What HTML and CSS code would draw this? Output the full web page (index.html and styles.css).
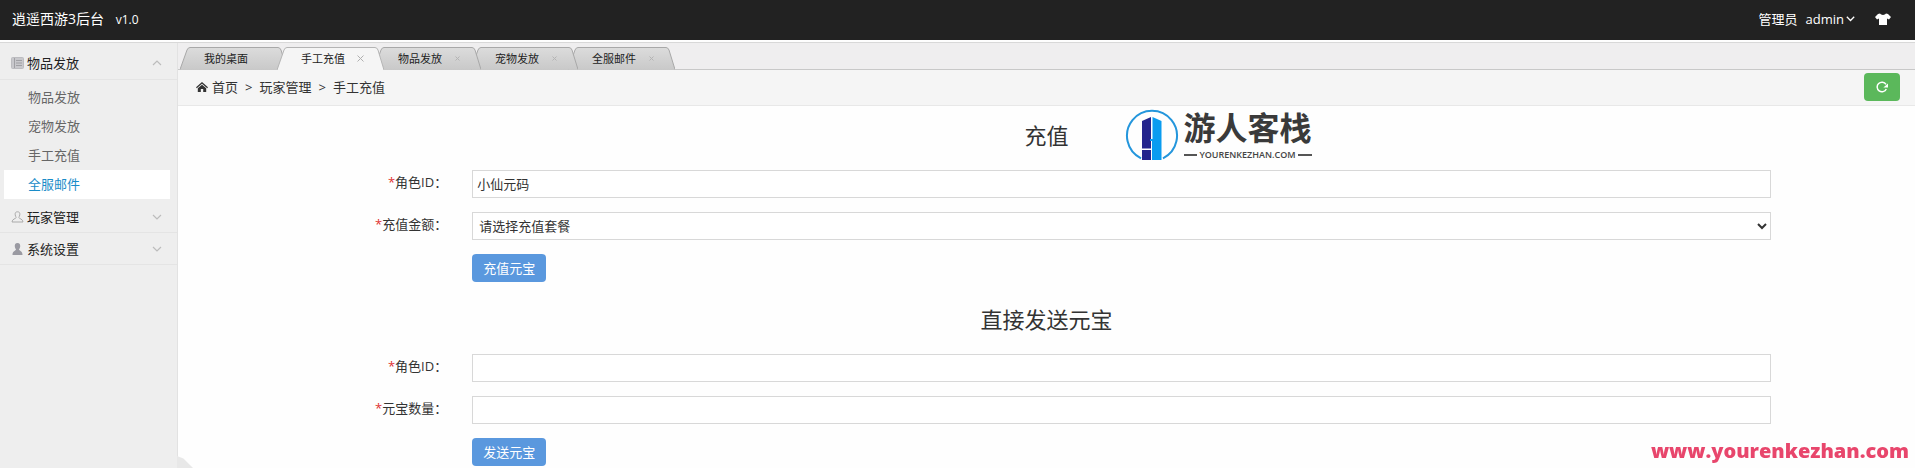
FILE: index.html
```
<!DOCTYPE html>
<html lang="zh-CN">
<head>
    <meta charset="UTF-8">
    <meta name="viewport" content="width=device-width, initial-scale=1.0">
    <title>逍遥西游3后台</title>
    <link rel="stylesheet" href="styles.css">
</head>
<body>
    <header class="navbar">
        <div class="brand">逍遥西游3后台 <span class="version">v1.0</span></div>
        <div class="userbar">
            <span>管理员</span>
            <a href="#" class="user">admin
                <svg width="9" height="6" viewBox="0 0 9 6"><path d="M0.8 0.8 4.5 4.5 8.2 0.8" fill="none" stroke="#fff" stroke-width="1.3"/></svg>
            </a>
            <a href="#" class="skin" aria-label="换肤">
                <svg width="16" height="12" viewBox="0 0 16 12"><path d="M5 0.5C6 2.4 10 2.4 11 0.5L13 1 16 4 14 6.5 12 5.5V12H4V5.5L2 6.5 0 4 3 1Z" fill="#fff"/></svg>
            </a>
        </div>
    </header>

    <div class="wrapper">
        <!-- 左侧菜单 -->
        <aside class="sidebar">
            <div class="menu-title open">
                <svg class="menu-icon" width="13" height="12" viewBox="0 0 13 12"><rect x="0.5" y="0.5" width="12" height="11" rx="1" fill="#c8c8cc" stroke="#bcbcc0"/><path d="M3.5 1V11M5 3.5H11M5 6H11M5 8.5H11" stroke="#a0a0a4"/></svg>
                <span>物品发放</span>
                <svg class="arrow" width="10" height="6" viewBox="0 0 10 6"><path d="M1 5 5 1 9 5" fill="none" stroke="#bcbcbc" stroke-width="1.2"/></svg>
            </div>
            <ul class="submenu">
                <li><a href="#">物品发放</a></li>
                <li><a href="#">宠物发放</a></li>
                <li><a href="#">手工充值</a></li>
                <li><a href="#" class="current">全服邮件</a></li>
            </ul>
            <div class="menu-title">
                <svg class="menu-icon" width="13" height="12" viewBox="0 0 13 12"><path d="M6.5 0.8C4.5 0.8 4 2 4.2 3.8 4.4 5.2 5 6 5.2 6.6 5 7.6 1 8 1 11H12C12 8 8 7.6 7.8 6.6 8 6 8.6 5.2 8.8 3.8 9 2 8.5 0.8 6.5 0.8Z" fill="none" stroke="#aaa"/></svg>
                <span>玩家管理</span>
                <svg class="arrow" width="10" height="6" viewBox="0 0 10 6"><path d="M1 1 5 5 9 1" fill="none" stroke="#bcbcbc" stroke-width="1.2"/></svg>
            </div>
            <div class="menu-title">
                <svg class="menu-icon" width="13" height="12" viewBox="0 0 13 12"><path d="M6.5 0C4.3 0 3.6 1.6 3.8 3.5 4 5 4.6 5.8 5 6.6 4.8 7.8 1.5 8 1.5 12H11.5C11.5 8 8.2 7.8 8 6.6 8.4 5.8 9 5 9.2 3.5 9.4 1.6 8.7 0 6.5 0Z" fill="#9a9aa2"/></svg>
                <span>系统设置</span>
                <svg class="arrow" width="10" height="6" viewBox="0 0 10 6"><path d="M1 1 5 5 9 1" fill="none" stroke="#bcbcbc" stroke-width="1.2"/></svg>
            </div>
        </aside>

        <main class="main">
            <svg width="0" height="0" class="defs">
                <defs>
                    <linearGradient id="tabGray" x1="0" y1="0" x2="0" y2="1">
                        <stop offset="0" stop-color="#dcdcdc"/>
                        <stop offset="1" stop-color="#c9c9c9"/>
                    </linearGradient>
                </defs>
            </svg>
            <nav class="tabs">
                <a href="#" class="tab">
                    <svg class="tab-bg" viewBox="0 0 107 23"><path d="M0 22.5 7 3Q8 0.5 10 0.5H98Q100 0.5 101 3L107 22.5" fill="url(#tabGray)" stroke="#a8a8a8"/></svg>
                    <span>我的桌面</span>
                </a>
                <a href="#" class="tab active">
                    <svg class="tab-bg" viewBox="0 0 107 23"><path d="M0 23 7 3Q8 0.5 10 0.5H98Q100 0.5 101 3L107 23" fill="#f5f5f5" stroke="#b4b4b4"/></svg>
                    <span>手工充值</span>
                    <svg class="close" width="7" height="7" viewBox="0 0 7 7"><path d="M0.5 0.5 6.5 6.5M6.5 0.5 0.5 6.5" stroke="#b0b0b0"/></svg>
                </a>
                <a href="#" class="tab">
                    <svg class="tab-bg" viewBox="0 0 107 23"><path d="M0 22.5 7 3Q8 0.5 10 0.5H98Q100 0.5 101 3L107 22.5" fill="url(#tabGray)" stroke="#a8a8a8"/></svg>
                    <span>物品发放</span>
                    <svg class="close" width="7" height="7" viewBox="0 0 7 7"><path d="M1.5 1.5 5.5 5.5M5.5 1.5 1.5 5.5" stroke="#b4b4b4"/></svg>
                </a>
                <a href="#" class="tab">
                    <svg class="tab-bg" viewBox="0 0 107 23"><path d="M0 22.5 7 3Q8 0.5 10 0.5H98Q100 0.5 101 3L107 22.5" fill="url(#tabGray)" stroke="#a8a8a8"/></svg>
                    <span>宠物发放</span>
                    <svg class="close" width="7" height="7" viewBox="0 0 7 7"><path d="M1.5 1.5 5.5 5.5M5.5 1.5 1.5 5.5" stroke="#b4b4b4"/></svg>
                </a>
                <a href="#" class="tab">
                    <svg class="tab-bg" viewBox="0 0 107 23"><path d="M0 22.5 7 3Q8 0.5 10 0.5H98Q100 0.5 101 3L107 22.5" fill="url(#tabGray)" stroke="#a8a8a8"/></svg>
                    <span>全服邮件</span>
                    <svg class="close" width="7" height="7" viewBox="0 0 7 7"><path d="M1.5 1.5 5.5 5.5M5.5 1.5 1.5 5.5" stroke="#b4b4b4"/></svg>
                </a>
            </nav>

            <div class="breadcrumb">
                <svg width="12" height="10" viewBox="0 0 12 10"><path d="M6 0 12 5.2 11.2 6.2 6 1.8 0.8 6.2 0 5.2Z" fill="#333"/><path d="M6 2.8 10.2 6.3V10H7.2V7H4.8V10H1.8V6.3Z" fill="#333"/></svg>
                <a href="#" class="home">首页</a>
                <span>&gt;</span>
                <span>玩家管理</span>
                <span>&gt;</span>
                <span>手工充值</span>
                <button type="button" class="btn btn-refresh" aria-label="刷新">
                    <svg width="14" height="12" viewBox="0 0 14 12"><path d="M11 3.4A4.8 4.8 0 1 0 11.3 8" fill="none" stroke="#fff" stroke-width="1.5"/><path d="M13 2.6V6.6H8.4Z" fill="#fff"/></svg>
                </button>
            </div>

            <div class="content">
                <form class="form">
                    <h2 class="form-title">充值</h2>
                    <div class="form-row">
                        <label for="roleId"><i>*</i>角色ID：</label>
                        <input type="text" id="roleId" value="小仙元码">
                    </div>
                    <div class="form-row">
                        <label for="amount"><i>*</i>充值金额：</label>
                        <select id="amount">
                            <option>请选择充值套餐</option>
                        </select>
                    </div>
                    <div class="form-row">
                        <button type="button" class="btn btn-primary">充值元宝</button>
                    </div>
                </form>

                <form class="form">
                    <h2 class="form-title">直接发送元宝</h2>
                    <div class="form-row">
                        <label for="sendRoleId"><i>*</i>角色ID：</label>
                        <input type="text" id="sendRoleId">
                    </div>
                    <div class="form-row">
                        <label for="sendNum"><i>*</i>元宝数量：</label>
                        <input type="text" id="sendNum">
                    </div>
                    <div class="form-row">
                        <button type="button" class="btn btn-primary">发送元宝</button>
                    </div>
                </form>

                <div class="logo">
                    <svg width="54" height="51" viewBox="0 0 54 51"><path d="M16 49.3A25 25 0 1 1 38 49.3" fill="none" stroke="#2496dc" stroke-width="2"/><path d="M17 12 26 8V39.5H17ZM17 41H26V51H17Z" fill="#24248c"/><path d="M27.5 8 36.5 12V51H27V32H25V30H27.5Z" fill="#0a9cf0"/></svg>
                    <div class="logo-text">
                        <div class="logo-name">游人客栈</div>
                        <div class="logo-url">YOURENKEZHAN.COM</div>
                    </div>
                </div>
            </div>
        </main>
    </div>

    <div class="corner"></div>
    <div class="site-url">www.yourenkezhan.com</div>
</body>
</html>
```
FILE: styles.css
```
* {
    box-sizing: border-box;
}
body {
    margin: 0;
    min-height: 100vh;
    display: flex;
    flex-direction: column;
    overflow: hidden;
    font-family: "Open Sans", "Noto Sans CJK SC", sans-serif;
    font-size: 13px;
    line-height: 20px;
    color: #333;
    background-color: #fefefe;
}
a {
    color: inherit;
    text-decoration: none;
}
svg {
    flex: none;
}

/* 顶部 */
.navbar {
    display: flex;
    justify-content: space-between;
    align-items: center;
    height: 40px;
    padding: 0 24px 2px 12px;
    background-color: #222;
    color: #fff;
}
.brand {
    font-size: 14px;
}
.version {
    margin-left: 8px;
    font-size: 12px;
}
.userbar {
    display: flex;
    align-items: center;
    gap: 8px;
}
.user {
    display: flex;
    align-items: center;
    gap: 2px;
}
.skin {
    display: flex;
    margin-left: 12px;
}
.wrapper {
    flex: 1;
    display: flex;
    margin-top: 2px;
    border-top: 1px solid #d8d8d8;
}

/* 左侧菜单 */
.sidebar {
    width: 178px;
    flex: none;
    padding-top: 4px;
    background-color: #eee;
    border-right: 1px solid #e2e2e2;
}
.menu-title {
    display: flex;
    align-items: center;
    height: 32px;
    padding: 0 15px 0 11px;
    border-bottom: 1px solid #e4e4e4;
    color: #222;
}
.menu-title.open {
    height: 33px;
}
.menu-icon {
    margin-right: 3px;
}
.arrow {
    margin-left: auto;
}
.submenu {
    list-style: none;
    margin: 0;
    padding: 3px 7px 2px 4px;
}
.submenu a {
    display: block;
    padding-left: 24px;
    line-height: 29px;
    color: #666;
}
.submenu .current {
    background-color: #fff;
    color: #1a8cc8;
}

/* 标签页 */
.main {
    flex: 1;
    min-width: 0;
}
.defs {
    position: absolute;
}
.tabs {
    display: flex;
    height: 27px;
    padding: 4px 0 0 2px;
    background-color: #efeeef;
    border-bottom: 1px solid #c8c8c8;
}
.tab {
    position: relative;
    display: flex;
    align-items: center;
    justify-content: space-between;
    width: 107px;
    height: 23px;
    margin-right: -10px;
    padding: 0 20px 0 24px;
    font-size: 11px;
    color: #222;
}
.tab-bg {
    position: absolute;
    left: 0;
    top: 0;
    width: 100%;
    height: 100%;
}
.tab span,
.close {
    position: relative;
}
.tab:nth-child(3) {
    z-index: 3;
}
.tab:nth-child(4) {
    z-index: 2;
}
.tab:nth-child(5) {
    z-index: 1;
}
.tab.active {
    z-index: 4;
}
.breadcrumb {
    display: flex;
    align-items: center;
    gap: 7px;
    height: 36px;
    padding: 0 15px 2px 18px;
    background-color: #f5f5f5;
    border-bottom: 1px solid #e8e8e8;
}
.home {
    margin-left: -3px;
}

/* 按钮 */
.btn {
    display: flex;
    align-items: center;
    justify-content: center;
    height: 28px;
    padding: 0 11px 2px;
    border: 0;
    border-radius: 4px;
    font-family: inherit;
    font-size: 13px;
    color: #fff;
    cursor: pointer;
}
.btn-refresh {
    margin-left: auto;
    padding-bottom: 0;
    background-color: #5bb85b;
}
.btn-primary {
    grid-column: 2;
    justify-self: start;
    background-color: #5a98de;
}

/* 表单 */
.content {
    position: relative;
}
.form {
    padding-top: 13px;
}
.form + .form {
    padding-top: 21px;
}
.form-title {
    margin: 0 0 19px;
    font-size: 22px;
    font-weight: normal;
    line-height: 32px;
    text-align: center;
}
.form-row {
    display: grid;
    grid-template-columns: 16.9% 1fr;
    column-gap: 25px;
    padding-right: 8.3%;
    margin-bottom: 14px;
}
.form-row:last-child {
    margin-bottom: 0;
}
.form-row label {
    line-height: 25px;
    text-align: right;
}
.form-row i {
    font-style: normal;
    color: #e03030;
}
.form-row input,
.form-row select {
    width: 100%;
    height: 28px;
    padding: 0 4px 2px;
    border: 1px solid #d8d8d8;
    border-radius: 0;
    background-color: #fff;
    font-family: inherit;
    font-size: 13px;
    color: #333;
}
.form-row select {
    padding: 0 2px;
}

/* 站点标识 */
.logo {
    position: absolute;
    left: calc(50% + 78px);
    top: 3px;
    display: flex;
    gap: 5px;
}
.logo-name {
    font-size: 32px;
    font-weight: 700;
    line-height: 38px;
    color: #3a3a3a;
}
.logo-url {
    display: flex;
    align-items: center;
    gap: 2px;
    margin-top: 4px;
    font-size: 9px;
    font-weight: 600;
    line-height: 8px;
    color: #444;
}
.logo-url::before,
.logo-url::after {
    content: "";
    flex: 1;
    height: 2px;
    background-color: #555;
}
.corner {
    position: fixed;
    left: 177px;
    bottom: 0;
    width: 16px;
    height: 12px;
    background-color: #e8e8e8;
    clip-path: polygon(0 0, 40% 20%, 100% 100%, 0 100%);
}
.site-url {
    position: fixed;
    right: 6px;
    bottom: 3px;
    font-size: 20px;
    font-weight: 800;
    line-height: 28px;
    color: #e8466c;
}
```
